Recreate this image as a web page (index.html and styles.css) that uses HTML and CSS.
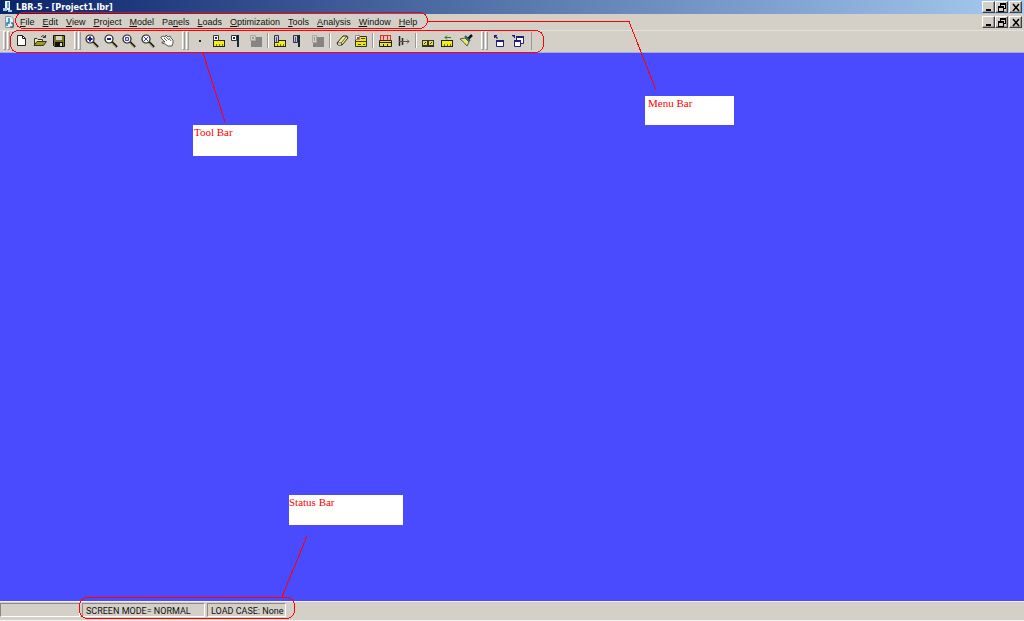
FILE: index.html
```html
<!DOCTYPE html>
<html lang="en">
<head>
<meta charset="utf-8">
<title>LBR-5 - [Project1.lbr]</title>
<link rel="stylesheet" href="styles.css">
</head>
<body>
<svg class="defs" aria-hidden="true">
  <defs>
    <g id="lens"><circle cx="6" cy="6" r="4" fill="#fff" stroke="#222" stroke-width="1.2"/><path d="M9 9L14 14" stroke="#222" stroke-width="2.4"/><path d="M9 10L13 14" stroke="#a89a30" stroke-width="1"/></g>
    <g id="ruler"><path d="M2 7H14V14H2Z" fill="#222"/><path d="M3 8H13V13H3Z" fill="#f4ee18"/><path d="M5.500 11V13M8.500 11V13M11.500 11V13" stroke="#777010"/></g>
    <g id="tag"><path d="M2.500 2.500H7.500V7.500H2.500Z" fill="#fff" stroke="#333"/><path d="M4 4H6V6H4Z" fill="#2424a0"/></g>
    <g id="sheet"><path d="M2.500 2.500H6.500V9.500H2.500Z" fill="#c4c4e8" stroke="#333"/><path d="M4.500 4V9" stroke="#5050a0"/></g>
    <g id="app"><path d="M5 1H10V10H5Z" fill="#e8f3ff"/><path d="M7 2H9V8H7Z" fill="#5c9bd0"/><path d="M3 8H7V11H3ZM8 10H12V12H8Z" fill="#a8c8e8"/></g>
    <g id="minimize"><path d="M2 6H7V8H2Z" fill="#000"/></g>
    <g id="restore"><path d="M3 0H9V6H7V5H8V2H4V3H3Z" fill="#000"/><path d="M1 3H7V9H1ZM2 5V8H6V5Z" fill="#000" fill-rule="evenodd"/></g>
    <g id="close"><path d="M2 1L8 8M8 1L2 8" stroke="#000" stroke-width="1.500"/></g>
  </defs>
</svg>
<div class="app">
  <header class="titlebar">
    <svg class="app-icon" viewBox="0 0 15 14"><use href="#app"/></svg>
    <h1 class="title">LBR-5 - [Project1.lbr]</h1>
    <div class="controls">
      <button class="ctl" aria-label="Minimize"><svg viewBox="0 0 10 9"><use href="#minimize"/></svg></button>
      <button class="ctl" aria-label="Restore"><svg viewBox="0 0 10 9"><use href="#restore"/></svg></button>
      <button class="ctl close" aria-label="Close"><svg viewBox="0 0 10 9"><use href="#close"/></svg></button>
    </div>
  </header>
  <nav class="menubar" aria-label="Main menu">
    <svg class="doc-icon" viewBox="0 0 12 14"><path d="M1.500 1.500H7L9.500 4V12.500H1.500Z" fill="#e4f1fb" stroke="#8298a8"/><path d="M5 3V8H3V11" fill="none" stroke="#2080b8" stroke-width="1.500"/><path d="M7 8H9V12H6" fill="none" stroke="#334"/></svg>
    <div class="menus">
      <button class="menu"><u>F</u>ile</button>
      <button class="menu"><u>E</u>dit</button>
      <button class="menu"><u>V</u>iew</button>
      <button class="menu"><u>P</u>roject</button>
      <button class="menu"><u>M</u>odel</button>
      <button class="menu">Pa<u>n</u>els</button>
      <button class="menu"><u>L</u>oads</button>
      <button class="menu"><u>O</u>ptimization</button>
      <button class="menu"><u>T</u>ools</button>
      <button class="menu"><u>A</u>nalysis</button>
      <button class="menu"><u>W</u>indow</button>
      <button class="menu"><u>H</u>elp</button>
    </div>
    <div class="controls">
      <button class="ctl" aria-label="Minimize document"><svg viewBox="0 0 10 9"><use href="#minimize"/></svg></button>
      <button class="ctl" aria-label="Restore document"><svg viewBox="0 0 10 9"><use href="#restore"/></svg></button>
      <button class="ctl close" aria-label="Close document"><svg viewBox="0 0 10 9"><use href="#close"/></svg></button>
    </div>
  </nav>
  <div class="toolbar" role="toolbar" aria-label="Tools">
    <span class="grip first"></span>
    <div class="tools three">
      <button class="tool" aria-label="New"><svg viewBox="0 0 16 16"><path d="M4.500 2.500H9.500L12.500 5.500V12.500H4.500Z" fill="#fff" stroke="#222"/><path d="M9.500 2.500V5.500H12.500" fill="none" stroke="#222"/></svg></button>
      <button class="tool" aria-label="Open"><svg viewBox="0 0 16 16"><path d="M2.500 12V5.500H5L6 6.500H10.500V8" fill="#f4f08a" stroke="#333"/><path d="M2 12.500L5 8.500H14.500L11.500 12.500Z" fill="#a09c20" stroke="#333"/><path d="M9 4Q11 1 13 4M13.500 2V4.500H11" fill="none" stroke="#333"/></svg></button>
      <button class="tool" aria-label="Save"><svg viewBox="0 0 16 16"><path d="M2.500 2.500H13.500V13.500H3.500L2.500 12.500Z" fill="#77751c" stroke="#111"/><path d="M5 3H11V7H5Z" fill="#d6d2ca"/><path d="M4 9H12V13H4Z" fill="#111"/><path d="M9 10H11V13H9Z" fill="#ddd"/></svg></button>
    </div>
    <span class="grip"></span>
    <div class="tools five">
      <button class="tool" aria-label="Zoom in"><svg viewBox="0 0 16 16"><use href="#lens"/><path d="M3.500 6H8.500M6 3.500V8.500" stroke="#1c1c98" stroke-width="2"/></svg></button>
      <button class="tool" aria-label="Zoom out"><svg viewBox="0 0 16 16"><use href="#lens"/><path d="M4 6H8" stroke="#1c1c98" stroke-width="2"/></svg></button>
      <button class="tool" aria-label="Zoom window"><svg viewBox="0 0 16 16"><use href="#lens"/><path d="M4.500 4.500H7.500V7.500H4.500Z" fill="#ccf" stroke="#4040a8"/></svg></button>
      <button class="tool" aria-label="Zoom extents"><svg viewBox="0 0 16 16"><use href="#lens"/><path d="M4 4L8 8M8 4L4 8" stroke="#4040b8"/></svg></button>
      <button class="tool" aria-label="Pan"><svg viewBox="0 0 16 16"><path d="M2 4L4 3L6 4L7 2L9 4L11 3L12 5L14 7V10L13 13H9L6 11L3 10L3 9L6 9L2 5Z" fill="#fff" stroke="#333" stroke-width=".8"/><path d="M5 5L8 8M7 4L10 7M10 5L12 8" stroke="#444" stroke-width=".8"/></svg></button>
    </div>
    <span class="grip"></span>
    <div class="tools four">
      <button class="tool" aria-label="Point"><svg viewBox="0 0 16 16"><path d="M7 7H9V9H7Z" fill="#222"/></svg></button>
      <button class="tool" aria-label="Add panel"><svg viewBox="0 0 16 16"><use href="#ruler"/><use href="#tag"/></svg></button>
      <button class="tool" aria-label="Add stiffener"><svg viewBox="0 0 16 16"><path d="M7 2H10V14H8V4H7Z" fill="#142c30"/><use href="#tag"/></svg></button>
      <button class="tool" aria-label="Add block" disabled><svg viewBox="0 0 16 16"><path d="M3 4H14V14H3Z" fill="#858585"/><path d="M2.500 2.500H7.500V7.500H2.500Z" fill="#d4d0c8" stroke="#aaa"/><path d="M4 4H6V6H4Z" fill="#999"/></svg></button>
    </div>
    <span class="sep"></span>
    <div class="tools three">
      <button class="tool" aria-label="Edit panel"><svg viewBox="0 0 16 16"><use href="#ruler"/><use href="#sheet"/></svg></button>
      <button class="tool" aria-label="Edit stiffener"><svg viewBox="0 0 16 16"><path d="M6 2H9V14H7V4H6Z" fill="#142c30"/><use href="#sheet"/></svg></button>
      <button class="tool" aria-label="Edit block" disabled><svg viewBox="0 0 16 16"><path d="M3 4H14V14H3Z" fill="#858585"/><path d="M2.500 2.500H6.500V9.500H2.500Z" fill="#d4d0c8" stroke="#aaa"/><path d="M4.500 4V8" stroke="#999"/></svg></button>
    </div>
    <span class="sep"></span>
    <div class="tools two">
      <button class="tool" aria-label="Erase"><svg viewBox="0 0 16 16"><path d="M3 10L9 3H13L14 5L8 12H4Z" fill="#f5f190" stroke="#222"/><path d="M3 10H7L13 3M7 10L8 12" fill="none" stroke="#222" stroke-width=".8"/><path d="M4 11H7" stroke="#fff"/></svg></button>
      <button class="tool" aria-label="Panel properties"><svg viewBox="0 0 16 16"><path d="M2.500 3.500H13.500V13.500H2.500Z" fill="#eee61d" stroke="#333"/><path d="M2.500 2.500H6.500V6.500H2.500Z" fill="#fff" stroke="#888"/><path d="M4 4H6V6H4Z" fill="#c33"/><path d="M8 5.500H12M3 8.500H13M5 11.500H8M10 11.500H12" stroke="#44400a"/></svg></button>
    </div>
    <span class="sep"></span>
    <div class="tools two">
      <button class="tool" aria-label="Loads"><svg viewBox="0 0 16 16"><path d="M3 2H14V7H3Z" fill="#f4c0b8"/><path d="M3 2.500H14M3.500 2V7M6.500 2V7M10.500 2V7M13.500 2V7" stroke="#e03030"/><path d="M2.500 7.500H14.500V13.500H2.500Z" fill="#eee61d" stroke="#222"/><path d="M3 9.500H14M6.500 11V13M10.500 11V13" stroke="#222"/></svg></button>
      <button class="tool" aria-label="Supports"><svg viewBox="0 0 16 16"><path d="M3.500 3V13M6.500 5V12" stroke="#222" stroke-width="1.500"/><path d="M3 8.500H13M11 6.500L13 8.500L11 10.500" fill="none" stroke="#555"/></svg></button>
    </div>
    <span class="sep"></span>
    <div class="tools three">
      <button class="tool" aria-label="Check"><svg viewBox="0 0 16 16"><path d="M2 7H14V14H2Z" fill="#333"/><path d="M3 8H7V12H3ZM9 8H13V12H9Z" fill="#eee61d"/><path d="M4 11L6 9M10 11L12 9" stroke="#333"/></svg></button>
      <button class="tool" aria-label="Convert"><svg viewBox="0 0 16 16"><use href="#ruler"/><path d="M12 4.500H6M8 2.500L6 4.500L8 6.500" fill="none" stroke="#208020"/></svg></button>
      <button class="tool" aria-label="Paint"><svg viewBox="0 0 16 16"><path d="M14 2L10 6" stroke="#111" stroke-width="2.500"/><path d="M2 6L7 5L11 9L9 13Q7 10 2 6Z" fill="#f0ea60" stroke="#555"/><path d="M7 3L12 8" stroke="#176470" stroke-width="2"/></svg></button>
    </div>
    <span class="grip"></span>
    <div class="tools two windows">
      <button class="tool" aria-label="New window"><svg viewBox="0 0 16 16"><path d="M3 2H6V3H5L7 5L6 6L4 4V5H3Z" fill="#1c1c80"/><path d="M5.500 7.500H12.500V13.500H5.500Z" fill="#fff" stroke="#202080"/><path d="M5 8H13" stroke="#202080" stroke-width="2"/></svg></button>
      <button class="tool" aria-label="Cascade windows"><svg viewBox="0 0 16 16"><path d="M6.500 3.500H13.500V10.500H6.500Z" fill="#fff" stroke="#202080"/><path d="M6 4H14" stroke="#202080" stroke-width="2"/><path d="M4.500 7.500H10.500V13.500H4.500Z" fill="#fff" stroke="#202080"/><path d="M4 8H11" stroke="#202080" stroke-width="2"/><path d="M2 2H5V5H4V4L2 3Z" fill="#202080"/></svg></button>
    </div>
  </div>
  <main class="workspace"></main>
  <footer class="statusbar">
    <div class="panel blank"></div>
    <div class="panel mode">SCREEN MODE= NORMAL</div>
    <div class="panel load">LOAD CASE: None</div>
  </footer>
  <svg class="marks" width="1024" height="621" viewBox="0 0 1024 621" aria-hidden="true">
    <rect x="15.500" y="12.500" width="412" height="16" rx="8"/>
    <rect x="10.500" y="30.500" width="533" height="22" rx="8"/>
    <rect x="79.500" y="597.500" width="215" height="21" rx="8"/>
    <path d="M428 21.500H629L655.500 89"/>
    <path d="M203 53L225 122"/>
    <path d="M307 536L282 597"/>
  </svg>
  <div class="note note-tool">Tool Bar</div>
  <div class="note note-menu">Menu Bar</div>
  <div class="note note-status">Status Bar</div>
</div>
</body>
</html>
```
FILE: styles.css
```css
* { box-sizing: border-box; }
body { margin: 0; font-family: Roboto, "Liberation Sans", Arial, sans-serif; font-size: 9px; color: #111; }
button { padding: 0; margin: 0; border: 0; background: none; font: inherit; color: inherit; }
svg { display: block; }
.defs { position: absolute; width: 0; height: 0; }

.app { position: relative; display: flex; flex-direction: column; min-height: 100vh; overflow: hidden; background: #d4d0c8; }

.titlebar { display: flex; align-items: center; height: 14px; padding-right: 2px; background: linear-gradient(90deg, #0a246a, #a6caf0); }
.app-icon { width: 15px; height: 14px; margin-right: 1px; }
.title { flex: 1; margin: 0; font: bold 9px/14px "DejaVu Sans Condensed", "DejaVu Sans", sans-serif; color: #fff; }

.controls { display: flex; }
.ctl { display: grid; place-items: center; width: 13px; height: 12px; background: #d4d0c8; border: 1px solid; border-color: #fff #404040 #404040 #fff; box-shadow: inset -1px -1px #999; }
.ctl svg { width: 10px; height: 9px; }
.ctl.close { margin-left: 1px; }

.menubar { display: flex; align-items: center; height: 16px; padding-right: 2px; }
.doc-icon { width: 12px; height: 14px; margin: 0 4px; flex: none; }
.menus { display: flex; flex: 1; gap: 8px; }
.menu { font-family: "Liberation Sans", Arial, sans-serif; line-height: 14px; white-space: nowrap; }

.toolbar { display: flex; align-items: center; height: 23px; padding-bottom: 2px; border-top: 1px solid #e4e1da; border-bottom: 1px solid #aaa8d8; }
.grip { display: flex; justify-content: flex-end; gap: 1px; width: 15px; height: 19px; padding-right: 2px; }
.grip.first { width: 12px; }
.grip::before, .grip::after { content: ""; width: 1px; border: 1px solid; border-color: #fff #999 #999 #fff; }
.tools { display: flex; }
.tool { display: grid; place-items: center; flex: 1; height: 18px; }
.tool svg { width: 16px; height: 16px; }
.two { width: 37px; }
.three { width: 56px; }
.four { width: 74px; }
.five { width: 93px; }
.sep { width: 2px; height: 15px; margin: 0 2px; border-left: 1px solid #999; border-right: 1px solid #fff; }
.windows { width: 42px; padding-right: 4px; border-right: 1px solid #999; }

.workspace { flex: 1; background: #4a4aff; }

.statusbar { display: flex; gap: 2px; height: 20px; padding: 1px 0 3px; border-top: 1px solid #f4f2ee; border-bottom: 1px solid #f4f2ee; }
.panel { padding-left: 3px; line-height: 14px; white-space: nowrap; border: 1px solid; border-color: #888 #fff #fff #888; }
.blank { width: 80px; }
.mode { width: 123px; }
.load { width: 79px; }

.marks { position: absolute; top: 0; left: 0; fill: none; stroke: #f00; stroke-width: 1; shape-rendering: crispEdges; }
.note { position: absolute; background: #fff; color: #f00; font: 11px/15px "Liberation Serif", "Times New Roman", serif; }
.note-tool { left: 193px; top: 125px; width: 104px; height: 31px; padding-left: 1px; }
.note-menu { left: 645px; top: 96px; width: 89px; height: 29px; padding-left: 3px; }
.note-status { left: 289px; top: 495px; width: 114px; height: 30px; }
```
